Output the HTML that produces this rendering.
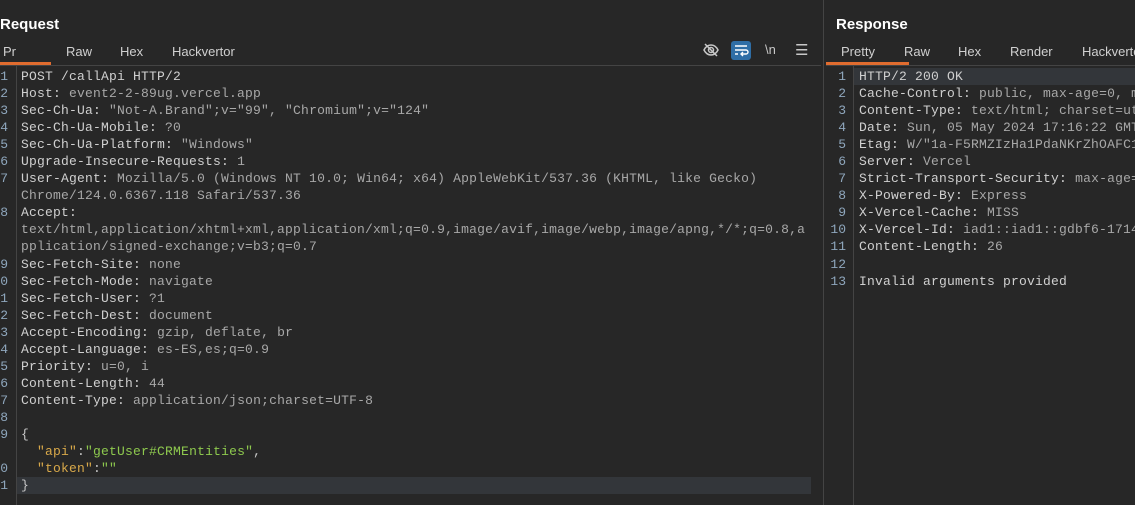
<!DOCTYPE html><html><head><style>
body{margin:0;width:1135px;height:505px;background:#272727;overflow:hidden;font-family:"Liberation Sans",sans-serif;position:relative}
.t{position:absolute;color:#fff;font-weight:bold;font-size:15px;top:16px}
.tab{position:absolute;top:44px;color:#d0d0d0;font-size:13px}
.ul{position:absolute;top:62px;height:3px;background:#e06c2f}
.hl{position:absolute;height:1px;background:#444;top:65px}
.vl{position:absolute;width:1px;background:#444}
.code{position:absolute;top:68px;font-family:"Liberation Mono",monospace;font-size:13px;letter-spacing:0.2px;line-height:17.04px;white-space:pre;color:#c8c8c8;overflow:hidden}
.num{position:absolute;top:68px;font-family:"Liberation Mono",monospace;font-size:13px;line-height:17.04px;white-space:pre;color:#8fa7bd;text-align:right}
.k{color:#d0d0d0}.v{color:#a8a8a8}.y{color:#d9a94a}.g{color:#8ec94e}
.cur{position:absolute;height:17px;background:#33363a}
</style></head><body>
<div class="t" style="left:0px">Request</div>
<div class="t" style="left:836px">Response</div>
<div class="tab" style="left:3px">Pr</div>
<div class="tab" style="left:66px">Raw</div>
<div class="tab" style="left:120px">Hex</div>
<div class="tab" style="left:172px">Hackvertor</div>
<div class="tab" style="left:841px">Pretty</div>
<div class="tab" style="left:904px">Raw</div>
<div class="tab" style="left:958px">Hex</div>
<div class="tab" style="left:1010px">Render</div>
<div class="tab" style="left:1082px">Hackvertor</div>
<div class="ul" style="left:0px;width:51px"></div>
<div class="ul" style="left:826px;width:83px"></div>
<div class="hl" style="left:0px;width:821px"></div>
<div class="hl" style="left:826px;width:309px"></div>
<div class="vl" style="left:823px;top:0px;height:505px"></div>
<div class="vl" style="left:16px;top:66px;height:439px"></div>
<div class="vl" style="left:853px;top:66px;height:439px"></div>
<svg style="position:absolute;left:702px;top:41px" width="18" height="18" viewBox="0 0 18 18" fill="none" stroke="#c8c8c8" stroke-width="1.5"><path d="M2 9c2-4 5-5 7-5s5 1 7 5c-2 4-5 5-7 5s-5-1-7-5z"/><circle cx="9" cy="9" r="2.5"/><path d="M3 3l12 12"/></svg>
<div style="position:absolute;left:731px;top:41px;width:20px;height:19px;background:#2f6ea6;border-radius:3px"></div>
<svg style="position:absolute;left:733px;top:43px" width="16" height="15" viewBox="0 0 16 15" fill="none" stroke="#fff" stroke-width="1.4"><path d="M2 3h12M2 7h11a2 2 0 010 4H8M10 9l-2 2 2 2M2 11h3"/></svg>
<div style="position:absolute;left:765px;top:42px;color:#c8c8c8;font-size:13px">\n</div>
<div style="position:absolute;left:795px;top:41px;color:#c8c8c8;font-size:15px">☰</div>
<div class="cur" style="left:17px;top:477px;width:794px"></div>
<div class="cur" style="left:854px;top:68px;width:281px"></div>
<div class="num" style="left:-6px;width:14px">1
2
3
4
5
6
7

8


9
0
1
2
3
4
5
6
7
8
9

0
1</div>
<div class="code" style="left:21px;width:800px"><span class="k">POST /callApi HTTP/2</span>
<span class="k">Host:</span> <span class="v">event2-2-89ug.vercel.app</span>
<span class="k">Sec-Ch-Ua:</span> <span class="v">"Not-A.Brand";v="99", "Chromium";v="124"</span>
<span class="k">Sec-Ch-Ua-Mobile:</span> <span class="v">?0</span>
<span class="k">Sec-Ch-Ua-Platform:</span> <span class="v">"Windows"</span>
<span class="k">Upgrade-Insecure-Requests:</span> <span class="v">1</span>
<span class="k">User-Agent:</span> <span class="v">Mozilla/5.0 (Windows NT 10.0; Win64; x64) AppleWebKit/537.36 (KHTML, like Gecko)</span>
<span class="v">Chrome/124.0.6367.118 Safari/537.36</span>
<span class="k">Accept:</span>
<span class="v">text/html,application/xhtml+xml,application/xml;q=0.9,image/avif,image/webp,image/apng,*/*;q=0.8,a</span>
<span class="v">pplication/signed-exchange;v=b3;q=0.7</span>
<span class="k">Sec-Fetch-Site:</span> <span class="v">none</span>
<span class="k">Sec-Fetch-Mode:</span> <span class="v">navigate</span>
<span class="k">Sec-Fetch-User:</span> <span class="v">?1</span>
<span class="k">Sec-Fetch-Dest:</span> <span class="v">document</span>
<span class="k">Accept-Encoding:</span> <span class="v">gzip, deflate, br</span>
<span class="k">Accept-Language:</span> <span class="v">es-ES,es;q=0.9</span>
<span class="k">Priority:</span> <span class="v">u=0, i</span>
<span class="k">Content-Length:</span> <span class="v">44</span>
<span class="k">Content-Type:</span> <span class="v">application/json;charset=UTF-8</span>

{
  <span class="y">"api"</span>:<span class="g">"getUser#CRMEntities"</span>,
  <span class="y">"token"</span>:<span class="g">""</span>
}</div>
<div class="num" style="left:826px;width:20px">1
2
3
4
5
6
7
8
9
10
11
12
13</div>
<div class="code" style="left:859px;width:276px"><span class="k">HTTP/2 200 OK</span>
<span class="k">Cache-Control:</span> <span class="v">public, max-age=0, must-revalidate</span>
<span class="k">Content-Type:</span> <span class="v">text/html; charset=utf-8</span>
<span class="k">Date:</span> <span class="v">Sun, 05 May 2024 17:16:22 GMT</span>
<span class="k">Etag:</span> <span class="v">W/"1a-F5RMZIzHa1PdaNKrZhOAFC1"</span>
<span class="k">Server:</span> <span class="v">Vercel</span>
<span class="k">Strict-Transport-Security:</span> <span class="v">max-age=63072000</span>
<span class="k">X-Powered-By:</span> <span class="v">Express</span>
<span class="k">X-Vercel-Cache:</span> <span class="v">MISS</span>
<span class="k">X-Vercel-Id:</span> <span class="v">iad1::iad1::gdbf6-1714</span>
<span class="k">Content-Length:</span> <span class="v">26</span>

<span class="k">Invalid arguments provided</span></div>
</body></html>
